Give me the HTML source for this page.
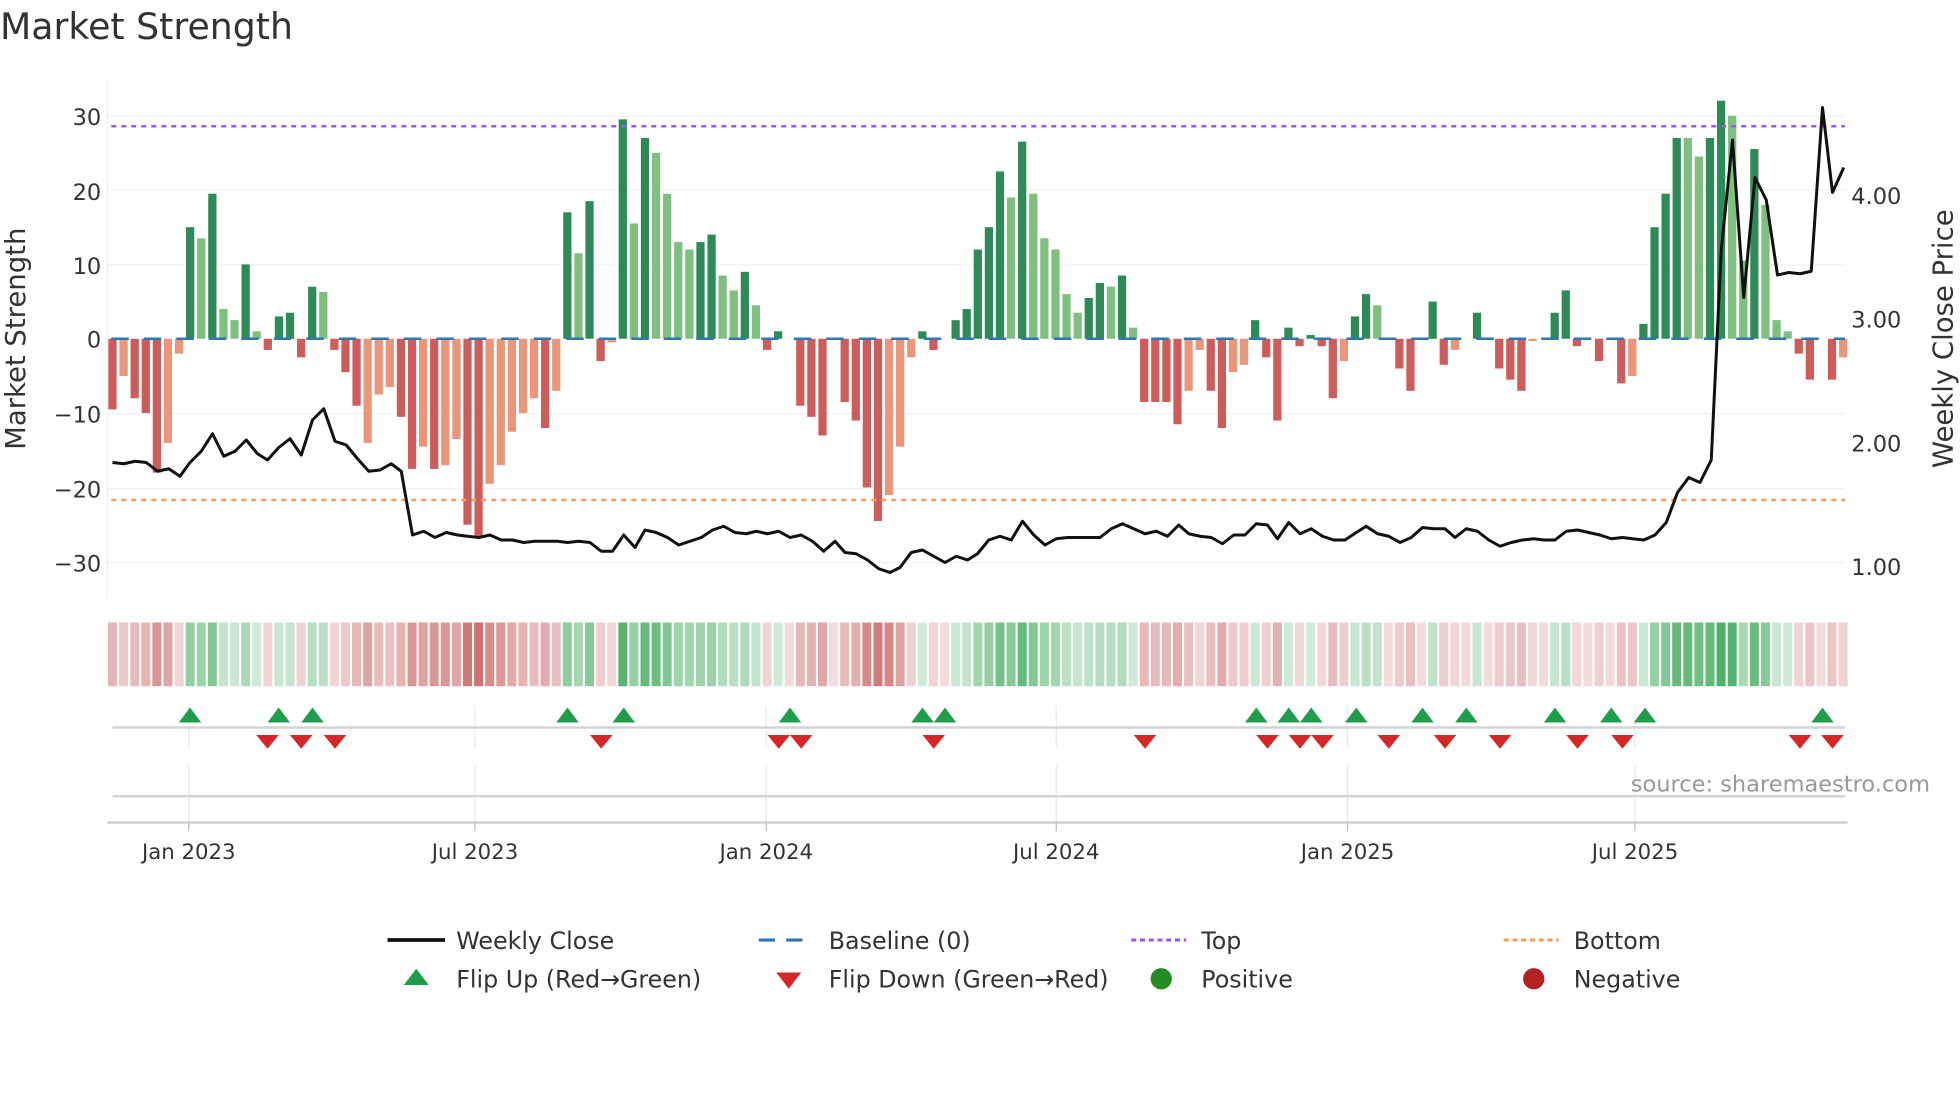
<!DOCTYPE html>
<html><head><meta charset="utf-8"><style>
html,body{margin:0;padding:0;background:#fff;width:1960px;height:1102px;overflow:hidden}
svg{display:block;font-family:"DejaVu Sans","Liberation Sans",sans-serif}
</style></head><body>
<svg id="s" width="1960" height="1102" viewBox="0 0 1568 881.6" xmlns="http://www.w3.org/2000/svg">
<text x="0" y="31" font-size="29" fill="#333">Market Strength</text>
<g stroke="#eef0f4" stroke-width="1">
<line x1="86" x2="1476" y1="93" y2="93"/><line x1="86" x2="1476" y1="152" y2="152"/><line x1="86" x2="1476" y1="212" y2="212"/>
<line x1="86" x2="1476" y1="331" y2="331"/><line x1="86" x2="1476" y1="391" y2="391"/><line x1="86" x2="1476" y1="450" y2="450"/>
</g>
<line x1="86" x2="86" y1="65" y2="478" stroke="#eceff3"/>
<g id="bars"></g>
<line x1="89" x2="1476" y1="271" y2="271" stroke="#2e77b0" stroke-width="2" stroke-dasharray="14 12"/>
<line x1="89" x2="1476" y1="101" y2="101" stroke="#9b5de5" stroke-width="2" stroke-dasharray="4 4"/>
<line x1="89" x2="1476" y1="400" y2="400" stroke="#f0a05a" stroke-width="2" stroke-dasharray="4 4"/>
<polyline id="pl" fill="none" stroke="#111" stroke-width="2.4" stroke-linejoin="round"/>
<g font-size="18" fill="#333" text-anchor="end">
<text x="81" y="100">30</text><text x="81" y="160">20</text><text x="81" y="219">10</text><text x="81" y="278">0</text>
<text x="81" y="338">−10</text><text x="81" y="398">−20</text><text x="81" y="457">−30</text></g>
<g font-size="18" fill="#333"><text x="1481" y="163">4.00</text><text x="1481" y="262">3.00</text><text x="1481" y="361">2.00</text><text x="1481" y="460">1.00</text></g>
<text transform="translate(20,271) rotate(-90)" font-size="22" fill="#333" text-anchor="middle">Market Strength</text>
<text transform="translate(1562,271) rotate(-90)" font-size="22" fill="#333" text-anchor="middle">Weekly Close Price</text>
<g id="heat"></g>
<g stroke="#e6e9ee" stroke-width="1">
<line x1="151" x2="151" y1="565" y2="598"/><line x1="380" x2="380" y1="565" y2="598"/><line x1="613" x2="613" y1="565" y2="598"/><line x1="845" x2="845" y1="565" y2="598"/><line x1="1078" x2="1078" y1="565" y2="598"/><line x1="1308" x2="1308" y1="565" y2="598"/>
<line x1="151" x2="151" y1="612" y2="658"/><line x1="380" x2="380" y1="612" y2="658"/><line x1="613" x2="613" y1="612" y2="658"/><line x1="845" x2="845" y1="612" y2="658"/><line x1="1078" x2="1078" y1="612" y2="658"/><line x1="1308" x2="1308" y1="612" y2="658"/>
</g>
<line x1="90" x2="1476" y1="582" y2="582" stroke="#d4d4d4" stroke-width="2"/>
<line x1="90" x2="1476" y1="637" y2="637" stroke="#d4d4d4" stroke-width="2"/>
<line x1="86" x2="1478" y1="658" y2="658" stroke="#d0d0d0" stroke-width="2"/>
<g stroke="#bbb"><line x1="151" x2="151" y1="658" y2="665"/><line x1="380" x2="380" y1="658" y2="665"/><line x1="613" x2="613" y1="658" y2="665"/><line x1="845" x2="845" y1="658" y2="665"/><line x1="1078" x2="1078" y1="658" y2="665"/><line x1="1308" x2="1308" y1="658" y2="665"/></g>
<g id="mk"></g>
<text x="1544" y="633" font-size="18" fill="#999" text-anchor="end">source: sharemaestro.com</text>
<g font-size="17" fill="#333" text-anchor="middle">
<text x="151" y="687">Jan 2023</text><text x="380" y="687">Jul 2023</text><text x="613" y="687">Jan 2024</text><text x="845" y="687">Jul 2024</text><text x="1078" y="687">Jan 2025</text><text x="1308" y="687">Jul 2025</text></g>
<g font-size="19" fill="#333">
<line x1="310" x2="356" y1="752" y2="752" stroke="#111" stroke-width="3"/><text x="365" y="759">Weekly Close</text>
<line x1="607" x2="651" y1="752" y2="752" stroke="#2e77b0" stroke-width="2.5" stroke-dasharray="13 9"/><text x="663" y="759">Baseline (0)</text>
<line x1="905" x2="949" y1="752" y2="752" stroke="#9b5de5" stroke-width="2.5" stroke-dasharray="4 3"/><text x="961" y="759">Top</text>
<line x1="1203" x2="1247" y1="752" y2="752" stroke="#f0a05a" stroke-width="2.5" stroke-dasharray="4 3"/><text x="1259" y="759">Bottom</text>
<polygon points="323,788 343,788 333,775" fill="#1e9e4a"/><text x="365" y="790">Flip Up (Red→Green)</text>
<polygon points="621,778 641,778 631,791" fill="#d62728"/><text x="663" y="790">Flip Down (Green→Red)</text>
<circle cx="929" cy="783" r="8.5" fill="#228b22"/><text x="961" y="790">Positive</text>
<circle cx="1227" cy="783" r="8.5" fill="#b22222"/><text x="1259" y="790">Negative</text>
</g>
</svg>
<script>
var V="-9.5R -5O -8R -10R -18R -14O -2O 15D 13.5L 19.5D 4L 2.5L 10D 1L -1.5R 3D 3.5D -2.5R 7D 6.3L -1.5R -4.5R -9R -14O -7.5O -6.5O -10.5R -17.5R -14.5O -17.5R -17O -13.5O -25R -26.5R -19.5O -17O -12.5O -10O -8O -12R -7O 17D 11.5L 18.5D -3R -0.5O 29.5D 15.5L 27D 25L 19.5L 13L 12L 13D 14D 8.5L 6.5L 9D 4.5L -1.5R 1D 0Z -9R -10.5R -13R 0Z -8.5R -11R -20R -24.5R -21O -14.5O -2.5O 1D -1.5R 0Z 2.5D 4D 12D 15D 22.5D 19L 26.5D 19.5L 13.5L 12L 6L 3.5L 5.5D 7.5D 7L 8.5D 1.5L -8.5R -8.5R -8.5R -11.5R -7O -1.5O -7R -12R -4.5O -3.5O 2.5D -2.5R -11R 1.5D -1R 0.5D -1R -8R -3O 3D 6D 4.5L 0Z -4R -7R 0Z 5D -3.5R -1.5O 0Z 3.5D 0Z -4R -5.5R -7R -0.3O 0Z 3.5D 6.5D -1R 0Z -3R 0Z -6R -5O 2D 15D 19.5D 27D 27L 24.5L 27D 32D 30L 10.5L 25.5D 18L 2.5L 1L -2R -5.5R 0Z -5.5R -2.5O".split(" ");
var C={D:"#2e8b57",L:"#7fbf7f",R:"#cd5c5c",O:"#e9967a",Z:"#fff"};
var ns="http://www.w3.org/2000/svg",b=document.getElementById("bars"),h=document.getElementById("heat");
function R(g,x,y,w,hh,f,o){var r=document.createElementNS(ns,"rect");r.setAttribute("x",x);r.setAttribute("y",y);r.setAttribute("width",w);r.setAttribute("height",hh);r.setAttribute("fill",f);if(o!=null)r.setAttribute("fill-opacity",o);g.appendChild(r);}
V.forEach(function(s,i){var v=parseFloat(s),t=s.slice(-1),cx=90+8.875*i;
if(v!==0){var hh=Math.abs(v)*5.95;R(b,cx-3.3,v>0?271-hh:271,6.6,hh,C[t]);}
var f,o;if(v>0){f="#3aa856";o=0.22+0.68*Math.min(1,v/32);}else{f="#c85a5a";o=0.22+0.65*Math.min(1,-v/27);}
R(h,cx-3.6,498,7.2,51,f,o);});
var P="90 370,99 371,108 369,117 370,126 377,135 375,144 381,152 370,161 361,170 347,179 365,188 361,197 352,206 363,214 368,223 358,232 351,241 364,250 336,259 327,268 353,277 356,286 367,295 377,304 376,313 371,321 377,330 428,339 425,348 430,357 426,366 428,374 429,383 430,392 428,401 432,410 432,419 434,428 433,437 433,446 433,454 434,463 433,472 434,481 441,490 441,499 428,508 438,516 424,525 426,534 430,543 436,552 433,561 430,570 424,579 421,588 426,597 427,605 425,614 427,623 425,632 430,641 428,650 433,659 441,668 433,676 442,685 443,694 448,703 455,712 458,720 454,729 442,738 440,747 445,756 450,765 445,774 448,782 443,791 432,800 429,809 432,818 417,827 428,836 436,845 431,854 430,863 430,872 430,880 430,889 423,898 419,907 423,916 427,925 425,934 429,943 420,951 427,960 429,969 430,978 435,987 428,996 428,1005 419,1014 420,1022 431,1031 418,1040 427,1049 423,1058 429,1067 432,1076 432,1085 426,1093 421,1102 427,1111 429,1120 434,1129 430,1138 422,1147 423,1156 423,1164 430,1173 423,1182 425,1191 432,1200 437,1209 434,1218 432,1227 431,1235 432,1244 432,1253 425,1262 424,1271 426,1280 428,1289 431,1298 430,1306 431,1315 432,1324 428,1333 418,1342 394,1351 382,1360 386,1369 368,1377 200,1386 112,1395 238,1404 142,1413 160,1422 220,1431 218,1440 219,1449 217,1458 86,1466 154,1475 134";
document.getElementById("pl").setAttribute("points",P);
var mk=document.getElementById("mk"),s="";
[152,223,250,454,499,632,738,756,1005,1031,1049,1085,1138,1173,1244,1289,1316,1458].forEach(function(x){s+='<polygon points="'+(x-9)+',578 '+(x+9)+',578 '+x+',566" fill="#1e9e4a"/>';});
[214,241,268,481,623,641,747,916,1014,1040,1058,1111,1156,1200,1262,1298,1440,1466].forEach(function(x){s+='<polygon points="'+(x-9)+',588 '+(x+9)+',588 '+x+',599" fill="#d62728"/>';});
mk.innerHTML=s;
</script>
</body></html>
